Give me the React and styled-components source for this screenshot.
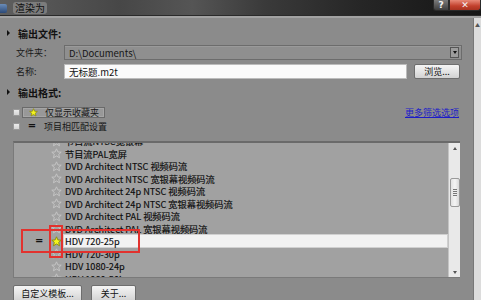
import styled, { createGlobalStyle } from "styled-components";

const GlobalStyles = createGlobalStyle`
  html, body {
    margin: 0;
    padding: 0;
    width: 481px;
    height: 300px;
    overflow: hidden;
    background: #8b8b8b;
  }
  body {
    font-family: "Noto Sans CJK SC", "Noto Sans", sans-serif;
    color: #161616;
  }
`;

const Window = styled.div`
  position: relative;
  width: 481px;
  height: 300px;
  display: flex;
  flex-direction: column;
  overflow: hidden;
  background: #8b8b8b;
`;

const TitleBar = styled.div`
  height: 16px;
  flex: none;
  display: flex;
  align-items: center;
  background: linear-gradient(
    90deg,
    #5e5e5e 0%,
    #474747 25%,
    #555 40%,
    #3a3a3a 55%,
    #262626 75%,
    #151515 100%
  );
  box-shadow: inset 0 -1px 0 #2a2a2a;
`;

const AppIcon = styled.div`
  width: 7px;
  height: 9px;
  margin: 0 6px 0 0;
  background: linear-gradient(180deg, #6a8cb8, #2c4a78);
  border-radius: 0 2px 2px 0;
`;

const Title = styled.span`
  font-size: 10px;
  color: #111;
  background: rgba(170, 170, 170, 0.45);
  padding: 0 2px;
  line-height: 12px;
  border-radius: 3px;
`;

const TitleButtons = styled.div`
  margin-left: auto;
  align-self: flex-start;
  display: flex;
  height: 11px;
`;

const CapButton = styled.div`
  width: ${(p) => p.$w}px;
  height: 11px;
  display: flex;
  align-items: center;
  justify-content: center;
  font-size: 9px;
  font-weight: bold;
  color: #f4f4f4;
  font-family: "DejaVu Sans", sans-serif;
  background: ${(p) =>
    p.$red
      ? "linear-gradient(180deg, #e88a78, #c2402c 60%, #a83220)"
      : "linear-gradient(180deg, #7a7a7a, #3e3e3e)"};
  border: 1px solid #2a2a2a;
  border-top: none;
  border-radius: ${(p) => (p.$red ? "0 0 3px 0" : "0 0 0 3px")};
  box-sizing: border-box;
`;

const BodyRow = styled.div`
  flex: 1;
  display: flex;
  border-top: 2px solid #a2a2a2;
  min-height: 0;
`;

const Main = styled.div`
  flex: 1;
  display: flex;
  flex-direction: column;
  padding: 0 13px 0 13px;
  min-width: 0;
`;

const OuterStrip = styled.div`
  width: 7px;
  flex: none;
  background: #dcdcdc;
  border-left: 1px solid #777;
  display: flex;
  flex-direction: column;
  align-items: center;
  font-size: 5px;
  color: #555;
  padding-top: 3px;
`;

const SectionHeader = styled.div`
  display: flex;
  align-items: center;
  height: 14px;
  margin: ${(p) => p.$mt}px 0 0 -6px;
  font-size: 10px;
  font-weight: bold;
  color: #111;
`;

const Caret = styled.span`
  width: 0;
  height: 0;
  border-top: 3px solid transparent;
  border-bottom: 3px solid transparent;
  border-left: 3px solid #111;
  margin-right: 8px;
`;

const FieldRow = styled.div`
  display: flex;
  align-items: center;
  height: 15px;
  margin-top: ${(p) => p.$mt}px;
`;

const FieldLabel = styled.span`
  width: 48px;
  padding-left: 3px;
  font-size: 9px;
  color: #1a1a1a;
  flex: none;
`;

const SelectBox = styled.div`
  flex: 1;
  height: 15px;
  box-sizing: border-box;
  display: flex;
  align-items: center;
  background: #8f8f8f;
  border: 1px solid #6c6c6c;
  box-shadow: inset 0 1px 0 #9a9a9a;
  font-size: 9.5px;
  padding-left: 4px;
  margin-right: -2px;
`;

const SelectArrow = styled.div`
  margin-left: auto;
  width: 9px;
  height: 11px;
  margin-right: 2px;
  background: #9c9c9c;
  border: 1px solid #555;
  box-sizing: border-box;
  display: flex;
  align-items: center;
  justify-content: center;

  &::after {
    content: "";
    border-left: 2px solid transparent;
    border-right: 2px solid transparent;
    border-top: 3px solid #111;
  }
`;

const TextInput = styled.div`
  flex: 1;
  height: 15px;
  box-sizing: border-box;
  background: #fbfbfb;
  border: 1px solid #bcbcbc;
  display: flex;
  align-items: center;
  padding-left: 4px;
  font-size: 9.5px;
  color: #111;
`;

const PushButton = styled.div`
  height: ${(p) => p.$h || 15}px;
  width: ${(p) => p.$w}px;
  margin-left: ${(p) => p.$ml || 0}px;
  box-sizing: border-box;
  display: flex;
  align-items: center;
  justify-content: center;
  font-size: 9px;
  color: #111;
  background: linear-gradient(180deg, #f4f4f4 0%, #e4e4e4 50%, #d2d2d2 100%);
  border: 1px solid #6e6e6e;
  border-radius: 2px;
  flex: none;
`;

const FilterRow = styled.div`
  display: flex;
  align-items: center;
  height: ${(p) => p.$h}px;
  margin-top: ${(p) => p.$mt}px;
`;

const CheckBox = styled.span`
  width: 7px;
  height: 7px;
  flex: none;
  background: linear-gradient(180deg, #ececec, #d4d4d4);
  border: 1px solid #9a9a9a;
  box-sizing: border-box;
`;

const FavFrame = styled.div`
  display: flex;
  align-items: center;
  width: 83px;
  height: 11px;
  margin-left: 2px;
  box-sizing: border-box;
  border: 1px solid #6a6a6a;
  background: #989898;
  box-shadow: inset 0 0 0 1px #a6a6a6;
  padding-left: 6px;
`;

const FilterText = styled.span`
  font-size: 9px;
  color: #161616;
  margin-left: ${(p) => p.$ml}px;
`;

const EqualMark = styled.span`
  font-size: 10px;
  font-weight: bold;
  color: #111;
  font-family: "DejaVu Sans", sans-serif;
  width: ${(p) => p.$w}px;
  text-align: ${(p) => p.$align || "left"};
  flex: none;
  line-height: 10px;
`;

const MoreLink = styled.span`
  margin-left: auto;
  font-size: 9px;
  color: #1c1cc8;
  text-decoration: underline;
  margin-right: 1px;
`;

const ListBox = styled.div`
  margin-top: 9px;
  height: 137px;
  display: flex;
  box-sizing: border-box;
  border-top: 2px solid #6a6a6a;
  border-left: 1px solid #7a7a7a;
  border-bottom: 1px solid #7a7a7a;
  background: #a1a1a1;
  flex: none;
`;

const ListRows = styled.div`
  flex: 1;
  overflow: hidden;
  display: flex;
  flex-direction: column;
`;

const ListInner = styled.div`
  margin-top: -8px;
  display: flex;
  flex-direction: column;
`;

const Row = styled.div`
  height: 12.5px;
  display: flex;
  align-items: center;
  flex: none;
`;

const MarkCol = styled.div`
  width: 35px;
  flex: none;
  display: flex;
  justify-content: flex-end;
  padding-right: 4px;
  box-sizing: border-box;
`;

const StarCol = styled.div`
  width: 14px;
  flex: none;
  display: flex;
  align-items: center;
  justify-content: center;
`;

const RowText = styled.div`
  flex: 1;
  height: ${(p) => (p.$selected ? "14px" : "12.5px")};
  display: flex;
  align-items: center;
  padding-left: 2px;
  font-size: 9.2px;
  color: #0c0c0c;
  white-space: nowrap;
  -webkit-text-stroke: 0.15px #0c0c0c;
  background: ${(p) => (p.$selected ? "#f2f2f2" : "transparent")};
  box-shadow: ${(p) => (p.$selected ? "inset 0 0 0 1px #d0d0d0" : "none")};
`;

const ScrollBar = styled.div`
  width: 12px;
  flex: none;
  background: #e9e9e9;
  border-left: 1px solid #c4c4c4;
  display: flex;
  flex-direction: column;
  align-items: center;
  box-sizing: border-box;
`;

const ScrollArrow = styled.div`
  height: 10px;
  display: flex;
  align-items: center;
  justify-content: center;

  &::after {
    content: "";
    border-left: 2px solid transparent;
    border-right: 2px solid transparent;
    ${(p) => (p.$up ? "border-bottom: 3px solid #555;" : "border-top: 3px solid #555;")}
  }
`;

const Thumb = styled.div`
  margin-top: 25px;
  width: 10px;
  height: 29px;
  box-sizing: border-box;
  border: 1px solid #9a9a9a;
  border-radius: 2px;
  background: linear-gradient(90deg, #e2e2e2, #f4f4f4 50%, #d8d8d8);
  display: flex;
  flex-direction: column;
  align-items: center;
  justify-content: center;
  gap: 1px;
`;

const Grip = styled.span`
  width: 4px;
  height: 1px;
  background: #777;
`;

const ButtonRow = styled.div`
  display: flex;
  margin-top: 7px;
`;

const RedBox = styled.div`
  position: absolute;
  left: ${(p) => p.$x}px;
  top: ${(p) => p.$y}px;
  width: ${(p) => p.$w}px;
  height: ${(p) => p.$h}px;
  border: 2px solid #e2322e;
  box-sizing: border-box;
  pointer-events: none;
`;

function Star({ filled, size = 11 }) {
  return (
    <svg width={size} height={size} viewBox="0 0 20 20">
      <polygon
        points="10,1.5 12.6,7.2 18.6,7.6 14,11.6 15.5,17.8 10,14.5 4.5,17.8 6,11.6 1.4,7.6 7.4,7.2"
        fill={filled ? "#f4f41e" : "none"}
        stroke={filled ? "#8a8a10" : "#c6c6c6"}
        strokeWidth={1.7}
        strokeLinejoin="round"
      />
    </svg>
  );
}

const presets = [
  "节目流NTSC宽银幕",
  "节目流PAL宽屏",
  "DVD Architect NTSC 视频码流",
  "DVD Architect NTSC 宽银幕视频码流",
  "DVD Architect 24p NTSC 视频码流",
  "DVD Architect 24p NTSC 宽银幕视频码流",
  "DVD Architect PAL 视频码流",
  "DVD Architect PAL 宽银幕视频码流",
  "HDV 720-25p",
  "HDV 720-30p",
  "HDV 1080-24p",
  "HDV 1080-50i",
];

const selectedPreset = "HDV 720-25p";

export default function App() {
  return (
    <Window>
      <GlobalStyles />
      <TitleBar>
        <AppIcon />
        <Title>渲染为</Title>
        <TitleButtons>
          <CapButton $w={16}>?</CapButton>
          <CapButton $w={32} $red>
            ✕
          </CapButton>
        </TitleButtons>
      </TitleBar>
      <BodyRow>
        <Main>
          <SectionHeader $mt={8}>
            <Caret />
            输出文件:
          </SectionHeader>
          <FieldRow $mt={5}>
            <FieldLabel>文件夹：</FieldLabel>
            <SelectBox>
              D:\Documents\
              <SelectArrow />
            </SelectBox>
          </FieldRow>
          <FieldRow $mt={4}>
            <FieldLabel>名称:</FieldLabel>
            <TextInput>无标题.m2t</TextInput>
            <PushButton $w={46} $ml={7}>
              浏览...
            </PushButton>
          </FieldRow>
          <SectionHeader $mt={6}>
            <Caret />
            输出格式:
          </SectionHeader>
          <FilterRow $h={11} $mt={8}>
            <CheckBox />
            <FavFrame>
              <Star filled size={9} />
              <FilterText $ml={7}>仅显示收藏夹</FilterText>
            </FavFrame>
            <MoreLink>更多筛选选项</MoreLink>
          </FilterRow>
          <FilterRow $h={12} $mt={2}>
            <CheckBox />
            <EqualMark $w={24} $align="center">
              =
            </EqualMark>
            <FilterText $ml={0}>项目相匹配设置</FilterText>
          </FilterRow>
          <ListBox>
            <ListRows>
              <ListInner>
                {presets.map((name) => {
                  const selected = name === selectedPreset;
                  return (
                    <Row key={name}>
                      <MarkCol>
                        {selected && <EqualMark $w={10}>=</EqualMark>}
                      </MarkCol>
                      <StarCol>
                        <Star filled={selected} />
                      </StarCol>
                      <RowText $selected={selected}>{name}</RowText>
                    </Row>
                  );
                })}
              </ListInner>
            </ListRows>
            <ScrollBar>
              <ScrollArrow $up />
              <Thumb>
                <Grip />
                <Grip />
                <Grip />
                <Grip />
              </Thumb>
              <ScrollArrow style={{ marginTop: "auto" }} />
            </ScrollBar>
          </ListBox>
          <ButtonRow>
            <PushButton $w={69} $h={17}>
              自定义模板...
            </PushButton>
            <PushButton $w={45} $h={17} $ml={9}>
              关于...
            </PushButton>
          </ButtonRow>
        </Main>
        <OuterStrip>▲</OuterStrip>
      </BodyRow>
      <RedBox $x={21} $y={229} $w={119} $h={24} />
      <RedBox $x={49} $y={225} $w={14} $h={33} />
    </Window>
  );
}
